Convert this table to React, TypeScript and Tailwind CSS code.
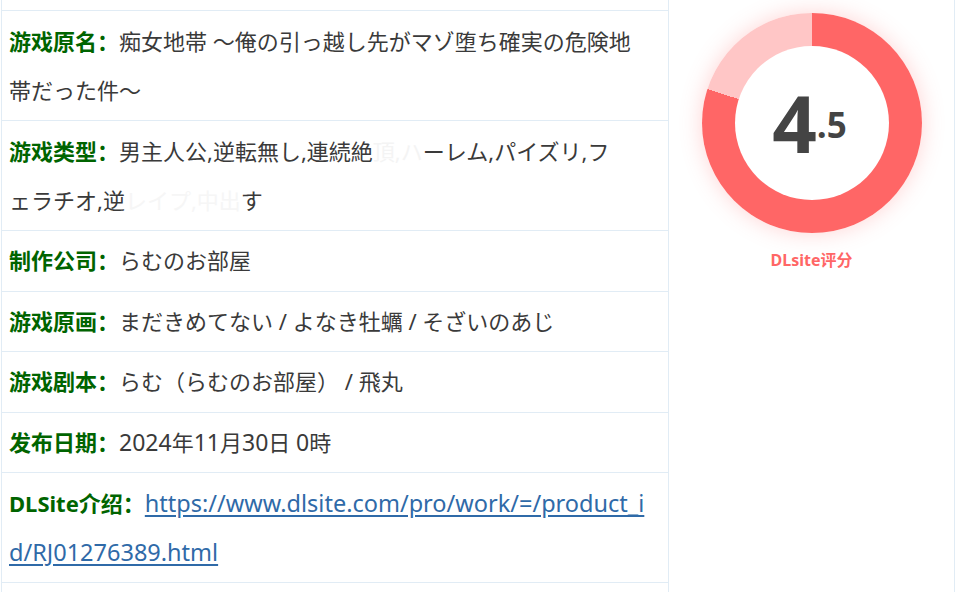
const font = { fontFamily: '"Noto Sans", "Noto Sans CJK SC", sans-serif' }

type RowProps = { label: string; children: React.ReactNode; single?: boolean }

function Row({ label, children, single }: RowProps) {
  return (
    <div
      className={`border-t border-[#e1ecf5] pl-[7px] pr-4 text-[22px] leading-[49px] text-[#3a3a3a] ${
        single ? 'py-[5.25px]' : 'py-[5.5px]'
      }`}
    >
      <span className="font-bold text-[#006400]">{label}：</span>
      {children}
    </div>
  )
}

export default function App() {
  return (
    <div className="w-[957px] h-[592px] overflow-hidden bg-white flex pl-px" style={font}>
      <div className="w-[668px] shrink-0 border-x border-[#e1ecf5]">
        <div className="h-[10px]" />
        <Row label="游戏原名">
          痴女地帯 ～俺の引っ越し先がマゾ堕ち確実の危険地
          <br />
          帯だった件～
        </Row>
        <Row label="游戏类型">
          男主人公,逆転無し,連続絶<span className="text-[#f4f4f4]">頂,ハ</span>ーレム,パイズリ,フ
          <br />
          ェラチオ,逆<span className="text-[#f6f6f6]">レイプ,中出</span>す
        </Row>
        <Row label="制作公司" single>
          らむのお部屋
        </Row>
        <Row label="游戏原画" single>
          まだきめてない / よなき牡蠣 / そざいのあじ
        </Row>
        <Row label="游戏剧本" single>
          らむ（らむのお部屋） / 飛丸
        </Row>
        <Row label="发布日期" single>
          <span className="text-[23px]">2024</span>年<span className="text-[23px]">11</span>月
          <span className="text-[23px]">30</span>日 <span className="text-[23px]">0</span>時
        </Row>
        <Row label="DLSite介绍">
          <a href="#" className="text-[#2f6aa8] text-[23.5px] underline underline-offset-[3px]">
            https://www.dlsite.com/pro/work/=/product_i
            <br />
            d/RJ01276389.html
          </a>
        </Row>
        <div className="border-t border-[#e1ecf5]" />
      </div>

      <div className="w-[286px] shrink-0 border-r border-[#e1ecf5] flex flex-col items-center pt-[13px]">
        <div className="w-[220px] h-[220px] rounded-full bg-[conic-gradient(#ff6666_0deg_288deg,#ffc6c6_288deg_360deg)] shadow-[0_0_22px_rgba(255,102,102,0.28)] flex items-center justify-center">
          <div className="w-[154px] h-[154px] rounded-full bg-white flex items-center justify-center">
            <div className="flex items-baseline font-bold text-[#444] pr-1" style={{ fontFamily: '"Open Sans", sans-serif' }}>
              <span className="text-[78px] leading-none">4</span>
              <span className="text-[35px] leading-none -translate-y-[15px]">.5</span>
            </div>
          </div>
        </div>
        <div className="mt-[17px] text-[16px] font-bold text-[#ff6666] leading-5">DLsite评分</div>
      </div>
    </div>
  )
}
